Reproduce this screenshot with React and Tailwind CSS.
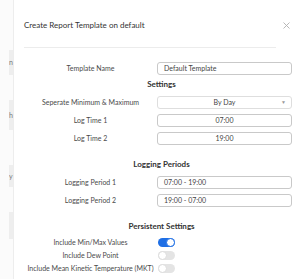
import { useState } from 'react';

const labelCls = 'text-center text-[7px] text-[#4a4a4a] leading-none';

function Row({ label, children }) {
  return (
    <div className="grid grid-cols-[133px_135px] items-center h-[13px]">
      <div className={labelCls}>{label}</div>
      {children}
    </div>
  );
}

function Heading({ children, className }) {
  return (
    <div className={`h-[10px] flex items-center justify-center text-[8px] font-bold text-[#333] leading-none ${className}`}>
      {children}
    </div>
  );
}

function Field({ value, center }) {
  return (
    <div
      className={`h-[13px] border border-[#c9c9c9] rounded-[3px] flex items-center text-[7px] text-[#444] leading-none ${
        center ? 'justify-center' : 'pl-[6px]'
      }`}
    >
      {value}
    </div>
  );
}

function Toggle({ on, onClick }) {
  return (
    <button
      onClick={onClick}
      className={`relative w-[17px] h-[9px] rounded-full ${on ? 'bg-[#1f6fe5]' : 'bg-[#e4e4e4]'}`}
    >
      <span
        className={`absolute top-0 w-[9px] h-[9px] rounded-full bg-white border ${
          on ? 'right-0 border-[#1f6fe5]' : 'left-0 border-[#dcdcdc]'
        }`}
      />
    </button>
  );
}

export default function App() {
  const [toggles, setToggles] = useState({ minmax: true, dew: false, mkt: false });
  const flip = (k) => setToggles((t) => ({ ...t, [k]: !t[k] }));

  return (
    <div className="w-[299px] h-[279px] overflow-hidden flex bg-white font-['Lato',sans-serif]">
      {/* page behind the dialog */}
      <div className="w-[14px] shrink-0 bg-[#fbfbfb] border-r border-[#ededed] flex flex-col text-[7px] text-[#777] leading-none">
        <div className="mt-[50px] ml-[9px] h-[25px] bg-[#eeeeee] flex items-center overflow-hidden">n</div>
        <div className="mt-[25px] ml-[9px] h-[30px] bg-[#eeeeee] flex items-center overflow-hidden">h</div>
        <div className="mt-[35px] ml-[9px] h-[22px] bg-[#eeeeee] flex items-center overflow-hidden">y</div>
        <div className="mt-[25px] ml-[9px] h-[27px] bg-[#eeeeee]" />
      </div>

      <div className="flex-1 pl-[10px] pt-[19px] flex flex-col">
        <div className="h-[12px] flex items-center justify-between pr-[8px]">
          <span className="text-[8px] text-[#333] leading-none">Create Report Template on default</span>
          <svg width="7" height="7" viewBox="0 0 7 7" className="mr-[1px]">
            <path d="M0.5 0.5 L6.5 6.5 M6.5 0.5 L0.5 6.5" stroke="#b0b0b0" strokeWidth="0.9" />
          </svg>
        </div>

        <div className="mt-[16px] w-[252px] h-px bg-[#ececec]" />

        <div className="mt-[14px]">
          <Row label="Template Name">
            <Field value="Default Template" />
          </Row>
        </div>

        <Heading className="mt-[4px]">Settings</Heading>

        <div className="mt-[7px]">
          <Row label="Seperate Minimum & Maximum">
            <div className="relative h-[13px] border border-[#dedede] rounded-[3px] flex items-center justify-center text-[7px] text-[#444] leading-none">
              By Day
              <span className="absolute right-[5px] top-[3px] text-[5px] text-[#999]">▼</span>
            </div>
          </Row>
        </div>
        <div className="mt-[5px]">
          <Row label="Log Time 1">
            <Field value="07:00" center />
          </Row>
        </div>
        <div className="mt-[5px]">
          <Row label="Log Time 2">
            <Field value="19:00" center />
          </Row>
        </div>

        <Heading className="mt-[14px]">Logging Periods</Heading>

        <div className="mt-[7px]">
          <Row label="Logging Period 1">
            <Field value="07:00 - 19:00" />
          </Row>
        </div>
        <div className="mt-[5px]">
          <Row label="Logging Period 2">
            <Field value="19:00 - 07:00" />
          </Row>
        </div>

        <Heading className="mt-[14px]">Persistent Settings</Heading>

        <div className="mt-[5px]">
          <Row label="Include Min/Max Values">
            <div className="flex pl-[1px]">
              <Toggle on={toggles.minmax} onClick={() => flip('minmax')} />
            </div>
          </Row>
          <Row label="Include Dew Point">
            <div className="flex pl-[1px]">
              <Toggle on={toggles.dew} onClick={() => flip('dew')} />
            </div>
          </Row>
          <Row label="Include Mean Kinetic Temperature (MKT)">
            <div className="flex pl-[1px]">
              <Toggle on={toggles.mkt} onClick={() => flip('mkt')} />
            </div>
          </Row>
        </div>
      </div>
    </div>
  );
}
